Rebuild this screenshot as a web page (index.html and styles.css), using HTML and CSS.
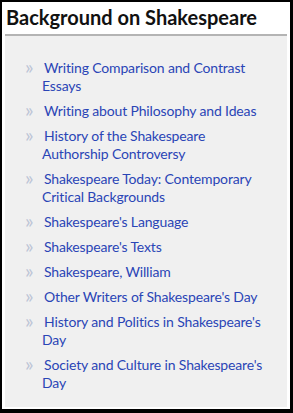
FILE: index.html
```html
<!DOCTYPE html>
<html lang="en">
	<head>
		<meta charset="utf-8">
		<title>Background on Shakespeare</title>
		<link rel="stylesheet" href="styles.css">
	</head>
	<body>

<div class="frame">
	<h2 class="title">Background on Shakespeare</h2>
	<div class="box">
		<ul class="links">
			<li><a href="#">Writing Comparison and Contrast Essays</a></li>
			<li><a href="#">Writing about Philosophy and Ideas</a></li>
			<li><a href="#">History of the Shakespeare Authorship Controversy</a></li>
			<li><a href="#">Shakespeare Today: Contemporary Critical Backgrounds</a></li>
			<li><a href="#">Shakespeare's Language</a></li>
			<li><a href="#">Shakespeare's Texts</a></li>
			<li><a href="#">Shakespeare, William</a></li>
			<li><a href="#">Other Writers of Shakespeare's Day</a></li>
			<li><a href="#">History and Politics in Shakespeare's Day</a></li>
			<li><a href="#">Society and Culture in Shakespeare's Day</a></li>
		</ul>
	</div>
</div>

	</body>
</html>
```

FILE: styles.css
```css
html, body {
	height: 100%;
}
* { box-sizing: border-box; }

body {
	margin: 0;
	background: black;
	font-family: Lato, "Open Sans", sans-serif;
}

.frame {
	height: 100%;
	border-style: solid;
	border-color: black;
	border-width: 2px 3px 4px 2px;
	background: white;
	display: flex;
	flex-direction: column;
	padding-bottom: 2px;
}

.title {
	margin: 0;
	padding: 3px 0 0 4px;
	height: 32px;
	font-size: 20px;
	font-weight: bold;
	color: #111;
}

.box {
	flex: 1;
	margin: 0 3px;
	border-top: 2px solid #b4b4b4;
	background: #f0f0f0;
}

.links {
	list-style: none;
	margin: 0;
	padding: 23px 17px 0 37px;
}

.links li {
	position: relative;
	margin-bottom: 7px;
	font-size: 14px;
	line-height: 18px;
	letter-spacing: -0.15px;
}

.links li::before {
	content: "\00bb";
	position: absolute;
	left: -17px;
	top: -2px;
	color: #bcc4d6;
	font-size: 20px;
}

.links a {
	color: #2a45b6;
	text-decoration: none;
}

.links a::before {
	content: "";
	padding-left: 2px;
}
```
